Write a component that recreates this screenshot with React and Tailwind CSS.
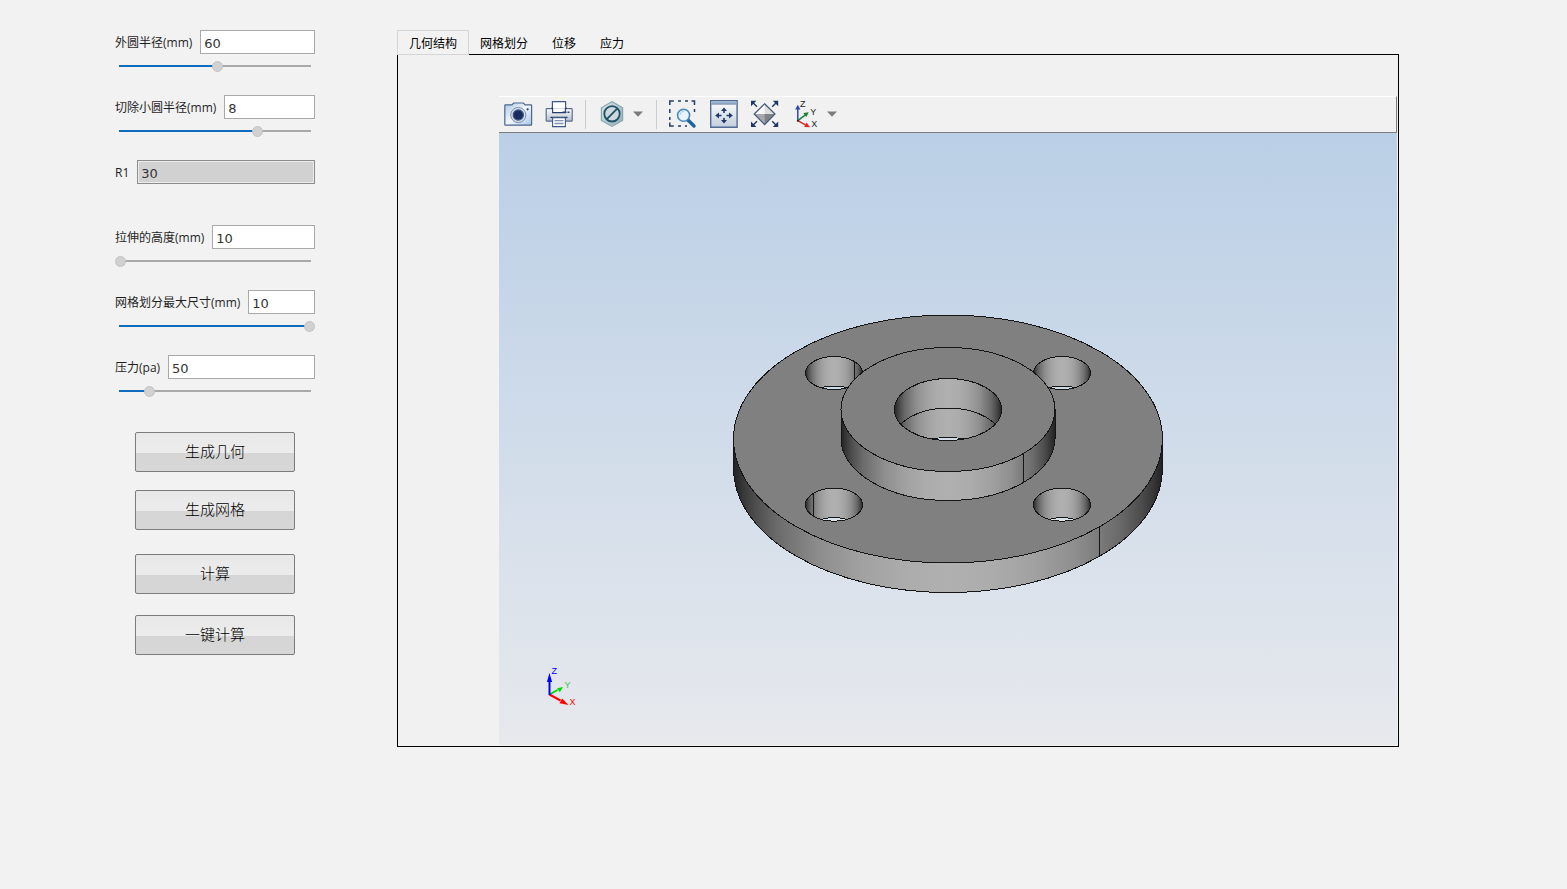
import { useState } from "react";

const FIELDS = [
  { id: "outer", label: "外圆半径(mm)", value: 60, min: 20, max: 98 },
  { id: "cut", label: "切除小圆半径(mm)", value: 8, min: 0, max: 11 },
  { id: "r1", label: "R1", value: 30, disabled: true },
  { id: "height", label: "拉伸的高度(mm)", value: 10, min: 10, max: 50 },
  { id: "mesh", label: "网格划分最大尺寸(mm)", value: 10, min: 1, max: 10 },
  { id: "pressure", label: "压力(pa)", value: 50, min: 10, max: 270 },
];

const TABS = ["几何结构", "网格划分", "位移", "应力"];

function Field({ id, label, value: initial, min, max, disabled }) {
  const [value, setValue] = useState(initial);
  const change = (e) => setValue(e.target.value);
  const percent = disabled ? 0 : ((Number(value) - min) / (max - min)) * 100;
  return (
    <div className="h-[65px]">
      <div className="flex h-6 items-center gap-2">
        <label htmlFor={id} className="shrink-0 pt-0.5 text-xs whitespace-nowrap text-[#1f1f1f]">
          {label}
        </label>
        <input
          id={id}
          type="text"
          value={value}
          disabled={disabled}
          onChange={change}
          className="h-6 w-0 min-w-0 flex-1 border border-[#a9a9a9] bg-white px-[3px] pt-0.5 font-['DejaVu_Sans',sans-serif] text-[13px] leading-5 text-[#333333] outline-none disabled:border-[#8c8c8c] disabled:bg-[#d1d1d1] disabled:text-[#333333] disabled:opacity-100 disabled:shadow-[inset_0_0_0_1px_#ececec]"
        />
      </div>
      {!disabled && (
        <input
          type="range"
          aria-label={label}
          min={min}
          max={max}
          value={value}
          onChange={change}
          style={{
            backgroundImage: `linear-gradient(to right, #0f6cbd ${percent}%, #a9a9a9 ${percent}%)`,
          }}
          className="mt-1.5 block h-3 w-full appearance-none bg-[length:96%_2px] bg-center bg-no-repeat [&::-webkit-slider-thumb]:size-[11px] [&::-webkit-slider-thumb]:appearance-none [&::-webkit-slider-thumb]:rounded-full [&::-webkit-slider-thumb]:border [&::-webkit-slider-thumb]:border-[#c4c4c4] [&::-webkit-slider-thumb]:bg-[#d1d1d1]"
        />
      )}
    </div>
  );
}

function ActionButton({ className, children }) {
  return (
    <button
      type="button"
      className={`h-10 w-full rounded-[2px] border border-[#7c7c7c] bg-[linear-gradient(to_bottom,#e8e8e8_0%,#ececec_52%,#d5d5d5_52%,#d7d7d7_100%)] pb-0.5 text-[15px] leading-5 font-light text-black ${className}`}
    >
      {children}
    </button>
  );
}

function ToolButton({ label, className = "", children }) {
  return (
    <button type="button" aria-label={label} className={`size-7 shrink-0 ${className}`}>
      <svg viewBox="0 0 28 28" className="size-7 overflow-visible" fill="none">
        {children}
      </svg>
    </button>
  );
}

function Caret({ label, className }) {
  return (
    <button type="button" aria-label={label} className={`w-2.5 shrink-0 ${className}`}>
      <svg viewBox="0 0 10 6" className="h-1.5 w-2.5">
        <path d="M0 0.5h10L5 5.8z" fill="#7c7c7c" />
      </svg>
    </button>
  );
}

function Separator({ className }) {
  return <span className={`h-[29px] w-px shrink-0 bg-[#cccccc] ${className}`} />;
}

function Toolbar() {
  return (
    <div className="flex h-[37px] items-center border-t border-r border-b border-t-white border-r-[#7d7d7d] border-b-[#7d7d7d] bg-[#f1f1f1] pb-px pl-[5px]">
      <ToolButton label="截图">
        <defs>
          <linearGradient id="cam" x1="0" y1="0" x2="1" y2="1">
            <stop offset="0" stopColor="#a9c6e6" />
            <stop offset=".5" stopColor="#f3f7fb" />
            <stop offset="1" stopColor="#a9c6e6" />
          </linearGradient>
        </defs>
        <path d="M1.4 4.8H8L9.5 3h10L21 4.8h6q.6 0 .6.6v19.2q0 .6-.6.6H1.4q-.6 0-.6-.6V5.4q0-.6.6-.6z" fill="url(#cam)" stroke="#4d6690" strokeWidth="1.2" />
        <circle cx="14.3" cy="15" r="7.6" fill="#d3dde9" stroke="#6f87a8" strokeWidth=".9" />
        <circle cx="14.3" cy="15" r="5.1" fill="#172d61" stroke="#3b5480" strokeWidth="1.2" />
        <circle cx="23.6" cy="9.3" r="1.1" fill="#273b66" />
      </ToolButton>
      <ToolButton label="打印" className="ml-[13px]">
        <defs>
          <linearGradient id="prn" x1="0" y1="0" x2="0" y2="1">
            <stop offset="0" stopColor="#ffffff" />
            <stop offset="1" stopColor="#b3bdcb" />
          </linearGradient>
        </defs>
        <path d="M7.4 9V1.6h13.2V9" fill="#ffffff" stroke="#3f5787" strokeWidth="1.2" />
        <rect x="1.2" y="8.6" width="26" height="12.6" rx=".8" fill="url(#prn)" stroke="#5a6f93" strokeWidth="1.2" />
        <path d="M6 8.2h1.6v4.4h12.8V8.2H22" fill="#ffffff" stroke="#243b6b" strokeWidth="1.1" />
        <path d="M17.5 12.2h7" stroke="#2a4170" strokeWidth="1.4" strokeDasharray="4 1" />
        <path d="M5.5 17.4h17" stroke="#20355f" strokeWidth="1.3" />
        <path d="M7.6 17.6h12.8v9H7.6z" fill="#ffffff" stroke="#3f5787" strokeWidth="1.1" />
        <path d="M9.5 20.6h9M9.5 23.5h9" stroke="#8193ae" strokeWidth="1.3" />
      </ToolButton>
      <Separator className="ml-3" />
      <ToolButton label="隐藏" className="ml-3">
        <defs>
          <linearGradient id="hex" x1="0" y1="0" x2="1" y2="1">
            <stop offset="0" stopColor="#dce8ec" />
            <stop offset="1" stopColor="#8eacb5" />
          </linearGradient>
        </defs>
        <path d="M14 1.6 24.6 7.8v12.6L14 26.4 3.4 20.4V7.8z" fill="url(#hex)" stroke="#86a5ae" strokeWidth="1.2" />
        <path d="M14 1.6v24.8M3.4 7.8 14 14l10.6-6.2" stroke="#a9c0c7" strokeWidth=".7" />
        <circle cx="14" cy="13.8" r="7.7" fill="#ccd8de" stroke="#215164" strokeWidth="1.8" />
        <path d="m8.8 19.2 10.4-10.6" stroke="#215164" strokeWidth="1.8" />
      </ToolButton>
      <Caret label="隐藏选项" className="ml-[7px]" />
      <Separator className="ml-[13px]" />
      <ToolButton label="框选缩放" className="ml-[11px]">
        <path d="M1.8 5V1h4M10 1h3M17 1h3M23.5 1h3v4M26.5 9v3M1.8 9v4M1.8 17v3M1.8 22.5V26h4M10 26h3M17 26h2" stroke="#263c69" strokeWidth="1.5" />
        <path d="m20 20 6 6" stroke="#1a659f" strokeWidth="3.4" strokeLinecap="round" />
        <circle cx="15.6" cy="15.2" r="6" fill="#e8f5fd" stroke="#4788bb" strokeWidth="1.6" />
        <path d="M12 15a4 4 0 0 1 4-3.8" stroke="#a5cde8" strokeWidth="1" />
      </ToolButton>
      <ToolButton label="缩放至窗口" className="ml-3.5">
        <defs>
          <linearGradient id="fit" x1="0" y1="0" x2="0" y2="1">
            <stop offset="0" stopColor="#ffffff" />
            <stop offset="1" stopColor="#c1cedd" />
          </linearGradient>
        </defs>
        <path d="M.7.8h26.4v26.4H.7z" fill="url(#fit)" stroke="#536b91" strokeWidth="1.4" />
        <path d="M1.4 1.5h25v2H1.4z" fill="#94b4d3" />
        <path d="M1.4 4h25" stroke="#536b91" strokeWidth="1" />
        <g stroke="#1f3868" strokeWidth="1.6">
          <path d="M14 13V9.5M14 18v3.8M11.5 15.5H7.3M16.5 15.5h4.2" />
        </g>
        <path d="m14 7.4 3 3.7h-6zM14 23.6l3-3.7h-6zM5.2 15.5l3.8-3v6zM22.8 15.5l-3.8-3v6z" fill="#1f3868" />
      </ToolButton>
      <ToolButton label="缩放至全部" className="ml-[13px]">
        <path d="M13.6 3.8 24 14H3.2z" fill="#f8f8f8" />
        <path d="M13.6 3.8V14H24z" fill="#dddddd" />
        <path d="M3.2 14H24L13.6 24.6z" fill="#a5a8ad" />
        <path d="M13.6 14H24L13.6 24.6z" fill="#7f8389" />
        <path d="M13.6 3.8 24 14 13.6 24.6 3.2 14z" stroke="#435879" strokeWidth="1.2" />
        <g stroke="#1f3868" strokeWidth="1.4">
          <path d="m2 2.7 4 4M25.2 2.7l-4 4M2 25.2l4-4M25.2 25.2l-4-4" />
        </g>
        <path d="M0 .8h5.4L0 6.2zM27.2.8h-5.4l5.4 5.4zM0 27h5.4L0 21.6zM27.2 27h-5.4l5.4-5.4z" fill="#1f3868" />
      </ToolButton>
      <ToolButton label="视图方向" className="ml-3.5">
        <path d="M4.8 20.7V8" stroke="#2947ad" strokeWidth="1.5" />
        <path d="m4.8 4.8 2.6 4.8H2.2z" fill="#2947ad" />
        <path d="m4.8 20.7 8-6" stroke="#16803a" strokeWidth="1.5" />
        <path d="m15.8 12.3-2.5 4.8-3-4.2z" fill="#16803a" />
        <path d="m4.8 20.7 8 4.4" stroke="#e32626" strokeWidth="1.5" />
        <path d="m17 27.2-5.8-.3 2.4-4.4z" fill="#e32626" />
        <circle cx="4.8" cy="20.7" r="1" fill="#222222" />
        <g fill="#222222" fontSize="9" fontFamily="Liberation Sans, sans-serif">
          <text x="7" y="6.8">Z</text>
          <text x="17.3" y="14.6">Y</text>
          <text x="18.3" y="27">X</text>
        </g>
      </ToolButton>
      <Caret label="视图选项" className="ml-1.5" />
    </div>
  );
}

const SHADE = [
  [0, "#222222"],
  [0.02, "#353535"],
  [0.05, "#4d4d4d"],
  [0.1, "#6a6a6a"],
  [0.2, "#8d8d8d"],
  [0.3, "#a1a1a1"],
  [0.4, "#acacac"],
  [0.5, "#b0b0b0"],
  [0.6, "#acacac"],
  [0.7, "#a1a1a1"],
  [0.8, "#8d8d8d"],
  [0.9, "#6a6a6a"],
  [0.95, "#4d4d4d"],
  [0.98, "#353535"],
  [1, "#222222"],
];

const HOLES = [
  { cx: 834, cy: 373, through: "#cddbe8", seam: 854 },
  { cx: 1062, cy: 373, through: "#cddbe8" },
  { cx: 834, cy: 504.7, through: "#dbe3ec", seam: 813.5 },
  { cx: 1062, cy: 504.7, through: "#dbe3ec" },
];

function Model() {
  return (
    <svg
      viewBox="499 133 898 612"
      role="img"
      aria-label="法兰模型"
      className="block h-auto w-full bg-linear-to-b from-[#bacfe6] to-[#e7e9ed]"
      fill="none"
    >
      <defs>
        <linearGradient id="wall">
          {SHADE.map(([offset, color]) => (
            <stop key={offset} offset={offset} stopColor={color} />
          ))}
        </linearGradient>
        {HOLES.map((h, i) => (
          <clipPath key={i} id={`hole${i}`}>
            <ellipse cx={h.cx} cy={h.cy} rx="28.5" ry="16.5" />
          </clipPath>
        ))}
        <clipPath id="bore">
          <ellipse cx="948" cy="409.5" rx="53.5" ry="31" />
        </clipPath>
      </defs>
      <g stroke="#151515" strokeWidth="1" shapeRendering="crispEdges">
        <path d="M733.5 439v29.5a214.5 124 0 0 0 429 0V439z" fill="url(#wall)" />
        <ellipse cx="948" cy="439" rx="214.5" ry="124" fill="#808080" />
        <path d="M1099.5 527v29" />
        {HOLES.map((h, i) => (
          <g key={i}>
            <g clipPath={`url(#hole${i})`}>
              <ellipse cx={h.cx} cy={h.cy} rx="28.5" ry="16.5" fill="url(#wall)" />
              {h.seam && <path d={`M${h.seam} ${h.cy - 16}v32`} />}
              <ellipse cx={h.cx} cy={h.cy + 29.5} rx="28.5" ry="16.5" fill={h.through} />
            </g>
            <ellipse cx={h.cx} cy={h.cy} rx="28.5" ry="16.5" />
          </g>
        ))}
        <path d="M841 409.5v29a107 62 0 0 0 214 0v-29z" fill="url(#wall)" />
        <ellipse cx="948" cy="409.5" rx="107" ry="62" fill="#808080" />
        <path d="M1023.5 454v29" />
        <g clipPath="url(#bore)">
          <ellipse cx="948" cy="409.5" rx="53.5" ry="31" fill="url(#wall)" />
          <ellipse cx="948" cy="439" rx="53.5" ry="31" />
          <ellipse cx="948" cy="468.5" rx="53.5" ry="31" fill="#d2dee9" />
        </g>
        <ellipse cx="948" cy="409.5" rx="53.5" ry="31" />
      </g>
      <g strokeWidth="2">
        <path d="m549.5 694.5 8-4.5" stroke="#00d800" />
        <path d="m549.5 694.5 11 6" stroke="#ff0000" />
        <path d="M549.5 695V680" stroke="#0000ff" />
      </g>
      <path d="m563 687-3.2 5.2-2.8-4z" fill="#00d800" />
      <path d="m549.5 673 2.6 9h-5.2z" fill="#0000ff" />
      <path d="m568.5 705-9-1.8 2.6-4.6z" fill="#ff0000" />
      <g fontSize="9" fontFamily="Liberation Sans, sans-serif">
        <text x="551.5" y="674" fill="#0000ff">Z</text>
        <text x="564.5" y="688" fill="#3fc050">Y</text>
        <text x="569.5" y="705" fill="#ff0000">X</text>
      </g>
    </svg>
  );
}

export default function App() {
  const [tab, setTab] = useState(0);
  return (
    <main className="flex min-h-screen items-start bg-[#f2f2f2] pt-[30px] pr-[168px] pl-[115px] font-['Open_Sans','Noto_Sans_CJK_SC',sans-serif]">
      <form className="w-[200px] shrink-0">
        {FIELDS.map((f) => (
          <Field key={f.id} {...f} />
        ))}
        <div className="px-5 pt-3">
          <ActionButton className="">生成几何</ActionButton>
          <ActionButton className="mt-[18px]">生成网格</ActionButton>
          <ActionButton className="mt-6">计算</ActionButton>
          <ActionButton className="mt-[21px]">一键计算</ActionButton>
        </div>
      </form>
      <section className="ml-[82px] min-w-0 flex-1">
        <div role="tablist" className="flex">
          {TABS.map((name, i) => (
            <button
              key={name}
              type="button"
              role="tab"
              aria-selected={i === tab}
              onClick={() => setTab(i)}
              className={`h-[25px] border px-[11px] pt-0.5 text-xs text-black ${
                i === tab ? "relative z-10 -mr-px border-[#d5d5d5] bg-[#f2f2f2]" : "border-transparent"
              }`}
            >
              {name}
            </button>
          ))}
        </div>
        <div role="tabpanel" className="-mt-px border border-black bg-[#f1f1f1] pt-[41px] pr-px pb-px pl-[101px]">
          <Toolbar />
          <Model />
        </div>
      </section>
    </main>
  );
}
